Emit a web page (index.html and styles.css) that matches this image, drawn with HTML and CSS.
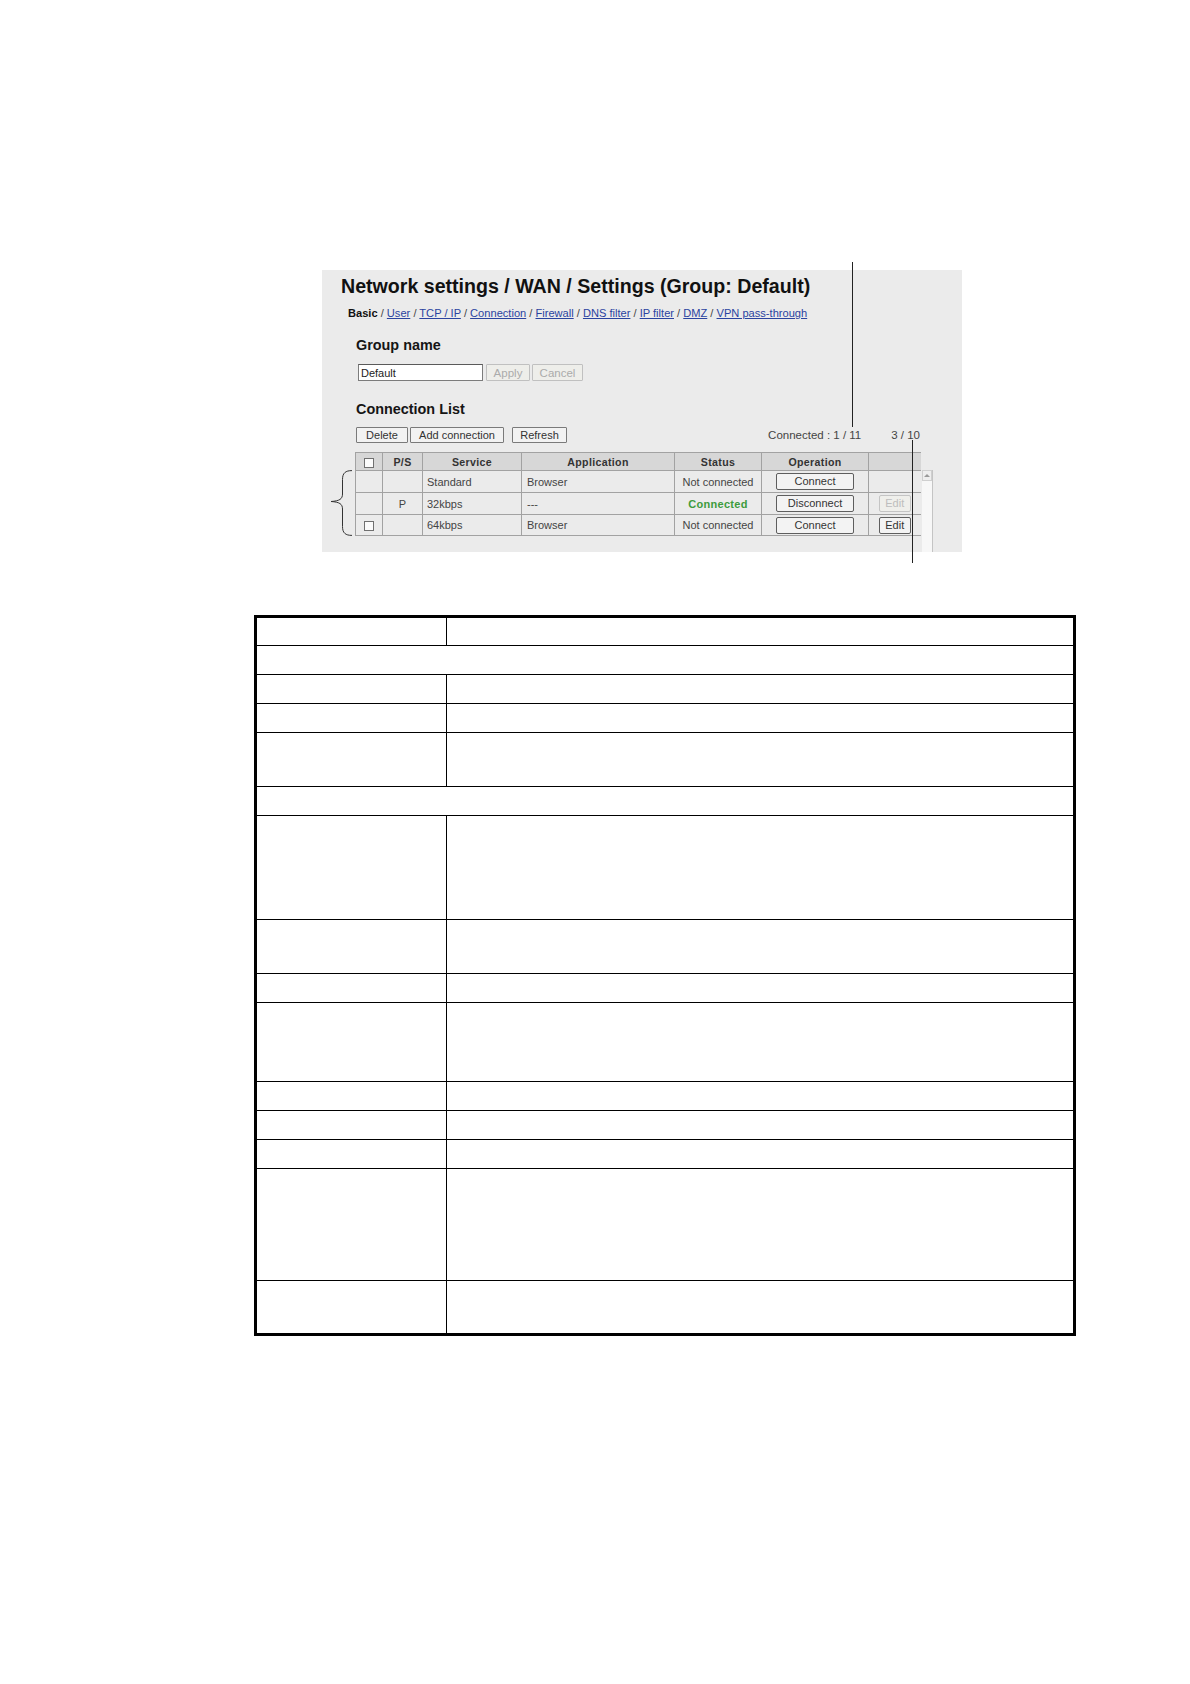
FILE: index.html
```
<!DOCTYPE html>
<html>
<head>
<meta charset="utf-8">
<title>Network settings / WAN / Settings</title>
<link rel="stylesheet" href="styles.css">
</head>
<body>
<div class="figure">
  <div class="panel">
    <h1 class="title">Network settings / WAN / Settings (Group: Default)</h1>
    <div class="nav"><b>Basic</b> / <a href="#">User</a> / <a href="#">TCP / IP</a> / <a href="#">Connection</a> / <a href="#">Firewall</a> / <a href="#">DNS filter</a> / <a href="#">IP filter</a> / <a href="#">DMZ</a> / <a href="#">VPN pass-through</a></div>
    <h2 class="heading group-heading">Group name</h2>
    <div class="name-row">
      <input class="name-input" type="text" value="Default">
      <button class="btn btn-apply" disabled>Apply</button>
      <button class="btn btn-cancel" disabled>Cancel</button>
    </div>
    <h2 class="heading list-heading">Connection List</h2>
    <div class="toolbar">
      <button class="btn btn-delete">Delete</button>
      <button class="btn btn-add">Add connection</button>
      <button class="btn btn-refresh">Refresh</button>
      <span class="count">Connected : 1 / 11</span>
      <span class="pages">3 / 10</span>
    </div>
    <div class="list-wrap">
      <table class="conn">
        <colgroup>
          <col class="c-chk"><col class="c-ps"><col class="c-svc"><col class="c-app"><col class="c-st"><col class="c-op"><col class="c-ed">
        </colgroup>
        <tr class="conn-head">
          <th><span class="chk"></span></th>
          <th>P/S</th>
          <th>Service</th>
          <th>Application</th>
          <th>Status</th>
          <th>Operation</th>
          <th></th>
        </tr>
        <tr class="conn-row">
          <td></td>
          <td class="ctr"></td>
          <td>Standard</td>
          <td>Browser</td>
          <td class="ctr">Not connected</td>
          <td class="ctr"><button class="rbtn rbtn-wide">Connect</button></td>
          <td class="ctr"></td>
        </tr>
        <tr class="conn-row">
          <td></td>
          <td class="ctr">P</td>
          <td>32kbps</td>
          <td>---</td>
          <td class="ctr ok">Connected</td>
          <td class="ctr"><button class="rbtn rbtn-wide">Disconnect</button></td>
          <td class="ctr"><button class="rbtn rbtn-edit" disabled>Edit</button></td>
        </tr>
        <tr class="conn-row last">
          <td class="ctr"><span class="chk"></span></td>
          <td class="ctr"></td>
          <td>64kbps</td>
          <td>Browser</td>
          <td class="ctr">Not connected</td>
          <td class="ctr"><button class="rbtn rbtn-wide">Connect</button></td>
          <td class="ctr"><button class="rbtn rbtn-edit">Edit</button></td>
        </tr>
      </table>
      <div class="scrollbar"><div class="scroll-up"><span class="arrow"></span></div></div>
    </div>
  </div>
  <div class="callout callout-a"></div>
  <div class="callout callout-b"></div>
  <svg class="brace" viewBox="0 0 22 66" width="22" height="66">
    <path d="M22 0.6 C15.5 0.6 12.5 3 12.5 9.5 L12.5 24 C12.5 29 9.5 31 1 31.5 C9.5 32 12.5 34 12.5 39 L12.5 56.5 C12.5 63 15.5 65.4 22 65.4" fill="none" stroke="#333" stroke-width="1"/>
  </svg>
</div>

<div class="spec">
  <div class="spec-row r27"><div class="spec-cell"></div><div class="spec-cell"></div></div>
  <div class="spec-row r29 span"><div class="spec-cell"></div></div>
  <div class="spec-row r29"><div class="spec-cell"></div><div class="spec-cell"></div></div>
  <div class="spec-row r29"><div class="spec-cell"></div><div class="spec-cell"></div></div>
  <div class="spec-row r54"><div class="spec-cell"></div><div class="spec-cell"></div></div>
  <div class="spec-row r29 span"><div class="spec-cell"></div></div>
  <div class="spec-row r104"><div class="spec-cell"></div><div class="spec-cell"></div></div>
  <div class="spec-row r54"><div class="spec-cell"></div><div class="spec-cell"></div></div>
  <div class="spec-row r29"><div class="spec-cell"></div><div class="spec-cell"></div></div>
  <div class="spec-row r79"><div class="spec-cell"></div><div class="spec-cell"></div></div>
  <div class="spec-row r29"><div class="spec-cell"></div><div class="spec-cell"></div></div>
  <div class="spec-row r29"><div class="spec-cell"></div><div class="spec-cell"></div></div>
  <div class="spec-row r29"><div class="spec-cell"></div><div class="spec-cell"></div></div>
  <div class="spec-row r112"><div class="spec-cell"></div><div class="spec-cell"></div></div>
  <div class="spec-row r53"><div class="spec-cell"></div><div class="spec-cell"></div></div>
</div>
</body>
</html>
```

FILE: styles.css
```
html, body {
  margin: 0;
  padding: 0;
  background: #ffffff;
}

body {
  font-family: "Liberation Sans", Arial, sans-serif;
  color: #333;
}

.figure {
  position: relative;
  width: 640px;
  margin: 270px 0 0 322px;
}

.panel {
  box-sizing: border-box;
  width: 640px;
  height: 282px;
  padding-top: 4px;
  background: #ebebeb;
  overflow: hidden;
}

.title {
  margin: 0 0 0 19px;
  font-size: 19.6px;
  line-height: 24px;
  font-weight: bold;
  color: #111;
  white-space: nowrap;
}

.nav {
  margin: 8px 0 0 26px;
  font-size: 11.1px;
  line-height: 14px;
  color: #444;
  white-space: nowrap;
}

.nav b {
  color: #111;
}

.nav a {
  color: #2a43a0;
  text-decoration: underline;
}

.heading {
  margin: 0 0 0 34px;
  font-size: 14.4px;
  line-height: 18px;
  font-weight: bold;
  color: #151515;
}

.group-heading {
  margin-top: 16px;
}

.list-heading {
  margin-top: 19px;
}

.name-row {
  display: flex;
  align-items: center;
  height: 17px;
  margin: 10px 0 0 36px;
}

.name-input {
  box-sizing: border-box;
  width: 125px;
  height: 17px;
  margin: 0;
  padding: 0 2px;
  border: 1px solid #7c7c7c;
  border-top-color: #5a5a5a;
  background: #fff;
  font-family: "Liberation Sans", Arial, sans-serif;
  font-size: 11px;
  color: #222;
  outline: none;
}

.btn {
  box-sizing: border-box;
  height: 16px;
  margin: 0;
  padding: 0;
  border: 1px solid #7a7a7a;
  border-radius: 1px;
  background: #f2f2f2;
  font-family: "Liberation Sans", Arial, sans-serif;
  font-size: 11px;
  line-height: 14px;
  color: #333;
}

.btn-apply {
  width: 44px;
  height: 17px;
  margin-left: 3px;
  border-color: #c0c0c0;
  color: #ababab;
  background: #eeeeea;
  font-size: 11.5px;
}

.btn-cancel {
  width: 51px;
  height: 17px;
  margin-left: 2px;
  border-color: #c0c0c0;
  color: #ababab;
  background: #eeeeea;
  font-size: 11.5px;
}

.toolbar {
  display: flex;
  align-items: center;
  width: 564px;
  height: 16px;
  margin: 9px 0 0 34px;
}

.btn-delete {
  width: 52px;
}

.btn-add {
  width: 94px;
  margin-left: 2px;
}

.btn-refresh {
  width: 55px;
  margin-left: 8px;
}

.count {
  margin-left: auto;
  font-size: 11.5px;
  color: #444;
  white-space: nowrap;
}

.pages {
  margin-left: 30px;
  font-size: 11.5px;
  color: #444;
  white-space: nowrap;
}

.list-wrap {
  display: flex;
  align-items: flex-start;
  margin: 9px 0 0 33px;
}

.conn {
  width: 565px;
  table-layout: fixed;
  border-collapse: collapse;
  font-size: 11px;
  color: #444;
}

.c-chk { width: 27px; }
.c-ps { width: 40px; }
.c-svc { width: 99px; }
.c-app { width: 153px; }
.c-st { width: 87px; }
.c-op { width: 107px; }
.c-ed { width: 52px; }

.conn th,
.conn td {
  padding: 0;
  border: 1px solid #a2a2a2;
  white-space: nowrap;
  overflow: hidden;
}

.conn th {
  background: #d7d7d7;
  font-weight: bold;
  font-size: 10.6px;
  letter-spacing: 0.35px;
  color: #333;
  text-align: center;
}

.conn-head {
  height: 18px;
}

.conn-row {
  height: 22px;
}

.conn-row.last {
  height: 21px;
}

.conn td {
  padding-left: 4px;
}

.conn td.ctr {
  padding-left: 0;
  text-align: center;
}

.conn td:nth-child(4) {
  padding-left: 5px;
}

.conn td:last-child,
.conn th:last-child {
  border-right: 0;
}

.ok {
  font-weight: bold;
  letter-spacing: 0.3px;
  color: #3d9b3d;
}

.chk {
  display: inline-block;
  box-sizing: border-box;
  width: 10px;
  height: 10px;
  border: 1px solid #707070;
  background: #fbfbfb;
  vertical-align: middle;
}

.rbtn {
  box-sizing: border-box;
  height: 17px;
  margin: 0;
  padding: 0;
  border: 1px solid #5e5e5e;
  border-radius: 2px;
  background: #f3f3f3;
  font-family: "Liberation Sans", Arial, sans-serif;
  font-size: 11px;
  line-height: 15px;
  color: #333;
  vertical-align: middle;
}

.rbtn-wide {
  width: 78px;
}

.rbtn-edit {
  width: 32px;
}

.rbtn-edit:disabled {
  border-color: #c4c4c4;
  color: #bdbdbd;
  background: #efefeb;
}

.scrollbar {
  box-sizing: border-box;
  width: 11px;
  height: 90px;
  margin-top: 18px;
  margin-left: 1px;
  background: #f7f7f7;
  border-right: 1px solid #c4c4c4;
}

.scroll-up {
  box-sizing: border-box;
  width: 10px;
  height: 11px;
  border: 1px solid #cfcfcf;
  background: #eeeeee;
  display: flex;
  align-items: center;
  justify-content: center;
}

.arrow {
  width: 0;
  height: 0;
  border-left: 3px solid transparent;
  border-right: 3px solid transparent;
  border-bottom: 3px solid #9a9a9a;
}

.callout {
  position: absolute;
  width: 1px;
  background: #222;
}

.callout-a {
  left: 530px;
  top: -8px;
  height: 165px;
}

.callout-b {
  left: 590px;
  top: 170px;
  height: 123px;
}

.brace {
  position: absolute;
  left: 8px;
  top: 200px;
}

.spec {
  box-sizing: border-box;
  width: 822px;
  margin: 63px 0 0 254px;
  border: 3px solid #000;
}

.spec-row {
  box-sizing: border-box;
  display: grid;
  grid-template-columns: 189px 1fr;
  border-top: 1px solid #000;
}

.spec-row:first-child {
  border-top: 0;
}

.spec-row.span {
  grid-template-columns: 1fr;
}

.spec-cell + .spec-cell {
  border-left: 1px solid #000;
}

.r27 { height: 27px; }
.r29 { height: 29px; }
.r53 { height: 53px; }
.r54 { height: 54px; }
.r79 { height: 79px; }
.r104 { height: 104px; }
.r112 { height: 112px; }
```
